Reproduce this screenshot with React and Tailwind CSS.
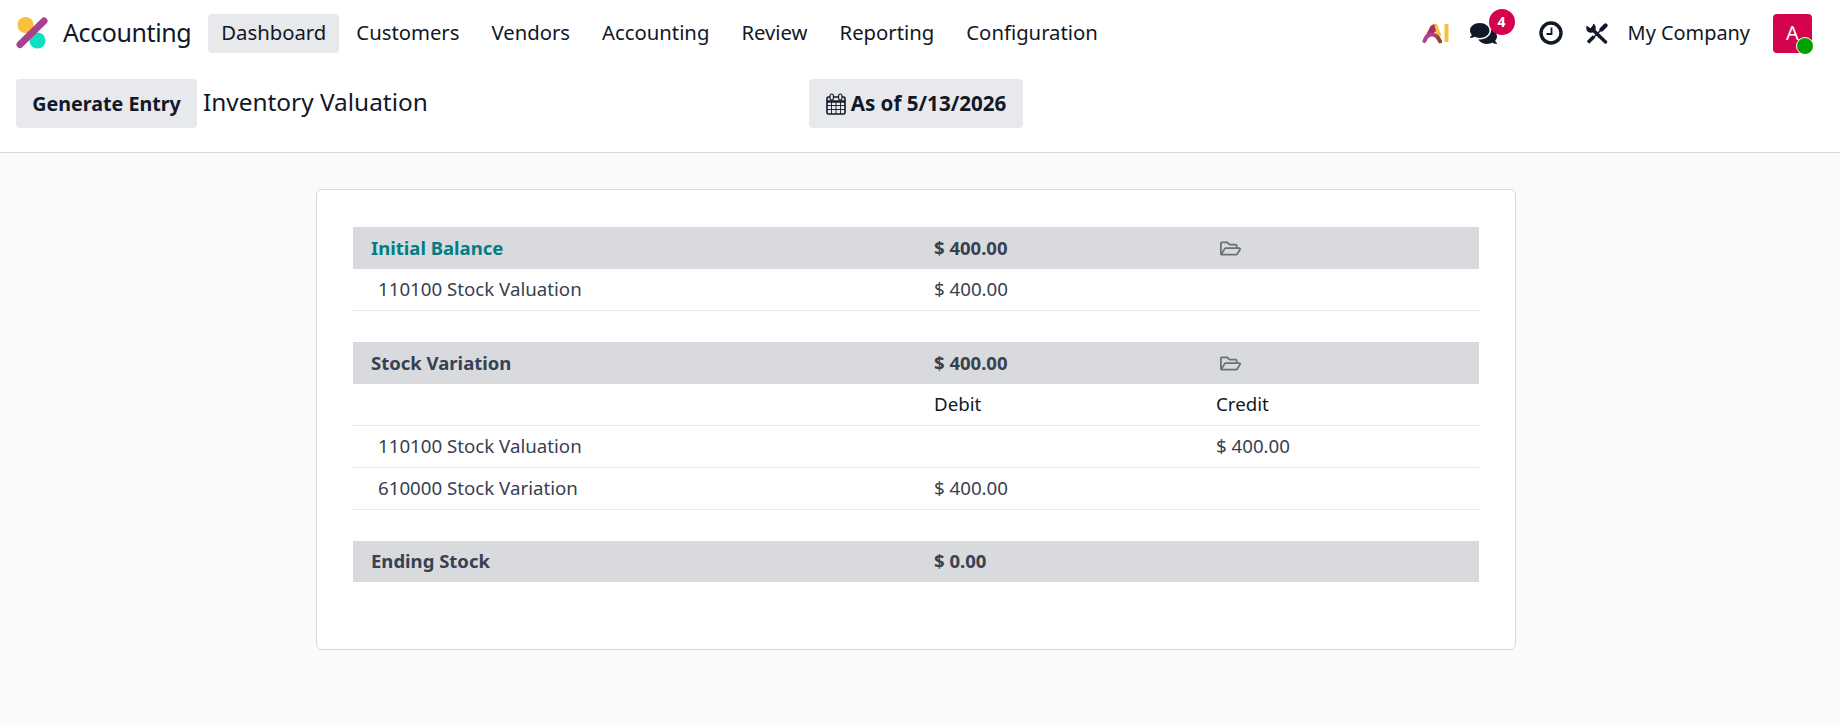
import React from "react";
import { FaRegFolderOpen, FaComments } from "react-icons/fa";

const NAV = ["Customers", "Vendors", "Accounting", "Review", "Reporting", "Configuration"];

function Logo() {
  return (
    <svg width="34" height="34" viewBox="0 0 34 34" className="shrink-0">
      <circle cx="10.5" cy="9" r="8" fill="#fbbf3c" />
      <circle cx="22.5" cy="24.5" r="8" fill="#0fdfc0" />
      <path d="M29 5 L5 28.5" stroke="#a8408d" strokeWidth="7" strokeLinecap="round" />
    </svg>
  );
}

function AiLogo() {
  return (
    <svg width="27" height="21" viewBox="0 0 27 21">
      <path d="M11 1 H15 L19.5 13 L15 13 Z" fill="#fbbf3c" />
      <path d="M2 16 L8.5 3 L12 1 L14 8 L10 12 Z" fill="#a83060" />
      <path d="M2.5 18 C4 13 7 11.5 10 11.5 C13 11.5 16 14 18 18.5" fill="none" stroke="#b0408c" strokeWidth="4" strokeLinecap="round" />
      <path d="M16 14 L18.5 18.5" stroke="#8a4a2a" strokeWidth="3" strokeLinecap="round" />
      <rect x="22.5" y="1" width="4" height="18" rx="1" fill="#fbbf3c" />
    </svg>
  );
}

function ClockIcon() {
  return (
    <svg width="24" height="24" viewBox="0 0 24 24">
      <circle cx="12" cy="12" r="10" fill="none" stroke="#111827" strokeWidth="3.4" />
      <path d="M12.5 6.5 V13 H7.5" fill="none" stroke="#111827" strokeWidth="1.8" />
    </svg>
  );
}

function ToolsIcon() {
  return (
    <svg width="22" height="21" viewBox="0 0 22 21" className="ml-[23px]">
      <path d="M6 6 L19.5 19" stroke="#111827" strokeWidth="3.4" strokeLinecap="round" />
      <circle cx="5" cy="5" r="4.8" fill="#111827" />
      <path d="M3 -1 L1.5 1 L4.5 5 L8 3 L9 -1 Z" fill="#fff" transform="rotate(-20 5 5)" />
      <path d="M19.5 2.5 L15.5 6.5" stroke="#111827" strokeWidth="4.2" strokeLinecap="round" />
      <path d="M15.5 6.5 L8 14" stroke="#111827" strokeWidth="1.4" />
      <path d="M8 13.5 L2 19.5" stroke="#111827" strokeWidth="3.6" />
    </svg>
  );
}

function CalendarIcon() {
  return (
    <svg width="20" height="22" viewBox="0 0 20 22" className="shrink-0">
      <rect x="1" y="4" width="18" height="17" rx="1.5" fill="none" stroke="#111827" strokeWidth="1.6" />
      <path d="M1 8.5 H19" stroke="#111827" strokeWidth="2.4" />
      <path d="M1 12.5 H19 M1 16.5 H19 M5.5 9 V21 M10 9 V21 M14.5 9 V21" stroke="#111827" strokeWidth="0.9" />
      <rect x="4" y="1" width="3.4" height="6" rx="1.7" fill="#e7e9ed" stroke="#111827" strokeWidth="1.1" />
      <rect x="12.6" y="1" width="3.4" height="6" rx="1.7" fill="#e7e9ed" stroke="#111827" strokeWidth="1.1" />
    </svg>
  );
}

function SectionHead({ label, amount, folder, teal, short }) {
  return (
    <div className={`grid grid-cols-[563px_282px_1fr] items-center ${short ? "h-[41px]" : "h-[42px]"} bg-[#d8dadd] text-[#374151] font-bold text-[18.5px] leading-none`}>
      <div className={`pl-[18px] ${teal ? "text-[#017e84]" : ""}`}>{label}</div>
      <div className="pl-[18px]">{amount}</div>
      <div className="pl-[22px]">
        {folder && <FaRegFolderOpen className="text-[#6b6f76] text-[21px]" />}
      </div>
    </div>
  );
}

function Row({ name, debit, credit, head }) {
  return (
    <div className={`grid grid-cols-[563px_282px_1fr] items-center h-[42px] border-b border-[#e7e9ed] text-[18.7px] leading-none ${head ? "text-[#111827]" : "text-[#374151]"}`}>
      <div className="pl-[25px]">{name}</div>
      <div className="pl-[18px]">{debit}</div>
      <div className="pl-[18px]">{credit}</div>
    </div>
  );
}

export default function App() {
  return (
    <div className="min-h-[725px] bg-[#f9fafb] font-['Noto_Sans',sans-serif] text-[#111827]">
      <header className="h-[153px] bg-white border-b border-[#d8dadd]">
        <nav className="flex items-center h-[66px] pl-[15px] pr-[28px]">
          <Logo />
          <span className="ml-[14px] text-[25px] tracking-[-0.4px]">Accounting</span>
          <div className="flex items-center ml-[17px] text-[20.3px]">
            <span className="flex items-center h-[39px] px-[13px] pb-[2px] rounded bg-[#e7e9ed]">Dashboard</span>
            <div className="flex items-center gap-[32px] ml-[17px] pb-[2px]">
              {NAV.map((n) => <span key={n}>{n}</span>)}
            </div>
          </div>
          <div className="flex items-center ml-auto">
            <AiLogo />
            <div className="relative ml-[21px]">
              <FaComments className="text-[27px]" />
              <span className="absolute -top-[11px] -right-[18px] flex items-center justify-center w-[26px] h-[26px] rounded-full bg-[#d5034e] text-white text-[14px] font-bold">4</span>
            </div>
            <div className="ml-[42px]"><ClockIcon /></div>
            <ToolsIcon />
            <span className="ml-[20px] text-[19.9px]">My Company</span>
            <div className="relative flex items-center justify-center ml-[23px] w-[39px] h-[39px] rounded bg-[#d5034e] text-white text-[20px]">
              A
              <span className="absolute -right-[2px] -bottom-[2px] w-[18px] h-[18px] rounded-full bg-[#00a000] border border-white"></span>
            </div>
          </div>
        </nav>
        <div className="flex items-center h-[49px] mt-[13px] pl-[16px]">
          <div className="flex items-center w-[793px]">
            <button className="h-[49px] w-[181px] rounded bg-[#e7e9ed] font-bold text-[19.7px] leading-none">Generate Entry</button>
            <span className="ml-[6px] text-[24.4px] leading-none -mt-[2px]">Inventory Valuation</span>
          </div>
          <button className="flex items-center gap-[5px] h-[49px] w-[214px] justify-center rounded bg-[#e7e9ed] font-bold text-[20.6px] leading-none">
            <CalendarIcon /> As of 5/13/2026
          </button>
        </div>
      </header>

      <main className="w-[1200px] h-[461px] ml-[316px] mt-[36px] px-[36px] pt-[37px] bg-white border border-[#d8dadd] rounded-md">
        <SectionHead label="Initial Balance" amount="$ 400.00" folder teal />
        <Row name="110100 Stock Valuation" debit="$ 400.00" />
        <div className="h-[31px]"></div>
        <SectionHead label="Stock Variation" amount="$ 400.00" folder />
        <Row debit="Debit" credit="Credit" head />
        <Row name="110100 Stock Valuation" credit="$ 400.00" />
        <Row name="610000 Stock Variation" debit="$ 400.00" />
        <div className="h-[31px]"></div>
        <SectionHead label="Ending Stock" amount="$ 0.00" short />
      </main>
    </div>
  );
}
